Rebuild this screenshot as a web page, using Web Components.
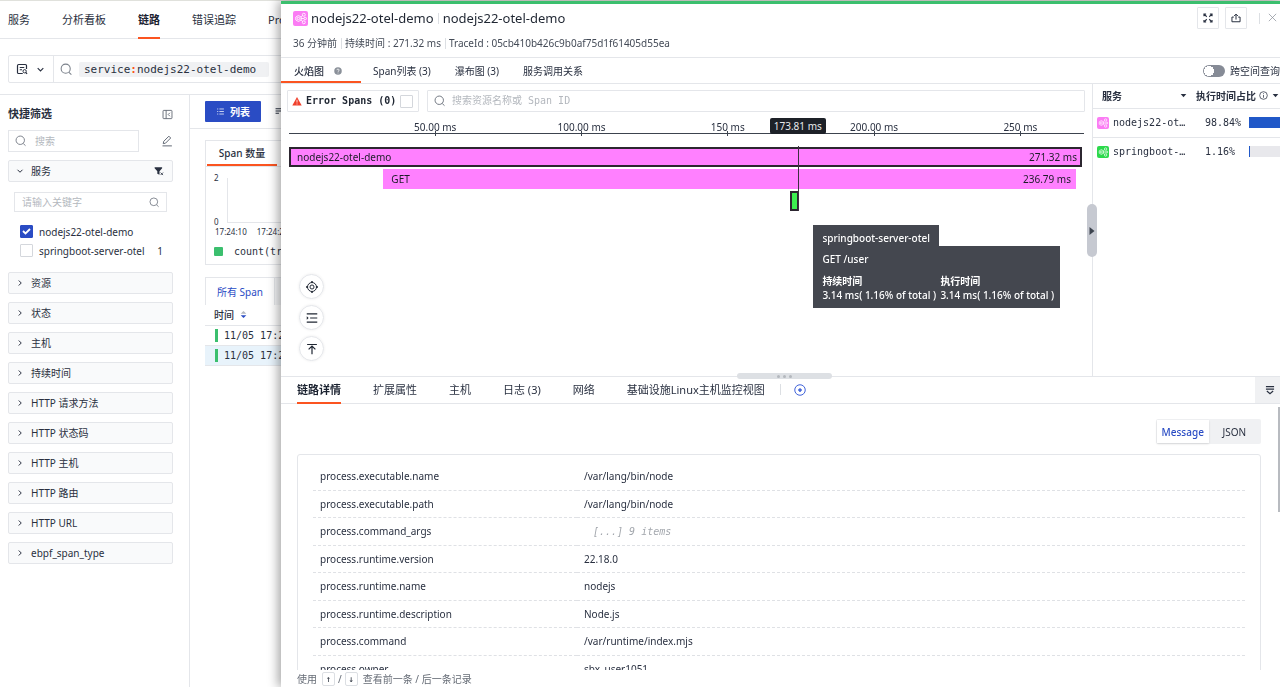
<!DOCTYPE html>
<html lang="zh-CN">
<head>
<meta charset="utf-8">
<title>链路</title>
<style>
html,body{height:100%;margin:0}
body{overflow:hidden;background:#fff;color:#293040;font:10px/14px "Noto Sans","Noto Sans CJK SC",sans-serif;
--line:#e4e6ea;--orange:#fb5420;--blue:#2a4cc4;--green:#3bbf6e;--mono:"DejaVu Sans Mono","Noto Sans CJK SC",monospace}
</style>
</head>
<body>
<trace-app></trace-app>
<script>
const reset = `*{box-sizing:border-box}:host{display:block}:host([hidden]){display:none}
button,input{font:inherit;color:inherit;margin:0;padding:0;border:0;background:none;outline:0}
button{cursor:pointer;white-space:nowrap}a{color:inherit;text-decoration:none;white-space:nowrap}h1,h2,p{margin:0;font:inherit}
input::placeholder{color:#b4b8be;opacity:1}`;
const define = (name, css, html) => customElements.define(name, class extends HTMLElement {
  constructor() {
    super();
    const t = document.createElement('template');
    t.innerHTML = `<style>${reset}${css}</style>${typeof html === 'function' ? html(this) : html}`;
    this.attachShadow({mode: 'open'}).append(t.content.cloneNode(true));
  }
});

const icons = {
  search: '<circle cx="7" cy="7" r="5.6"/><path d="M11 11.4l3 2.8"/>',
  query: '<path stroke-width="1.600" d="M14 8V3.500A1.500 1.500 0 0 0 12.500 2h-9A1.500 1.500 0 0 0 2 3.500v9A1.500 1.500 0 0 0 3.500 14H9M5 6h6M5 9h3"/><circle cx="11.500" cy="11" r="2.200"/><path stroke-width="1.600" d="M13 12.700l1.800 1.800"/>',
  down: '<path stroke-width="2" d="M3 5.500l5 5 5-5"/>',
  right: '<path stroke-width="2" d="M5.500 3l5 5-5 5"/>',
  fold: '<rect x="1.500" y="2" width="13" height="12" rx="1"/><path d="M6 2v12M11.500 5.500L9 8l2.500 2.500"/>',
  pencil: '<path d="M3 11.500l.6-3L10.500 1.600l2.400 2.400L6 10.900zM2 14.500h12.500"/>',
  filter: '<path fill="currentColor" stroke="none" d="M1 2h12v1.500L8.800 8.500V14l-3.500-1.800V8.500L1 3.500z"/><path stroke-width="1.300" d="M10.500 10.500l4 4m0-4l-4 4"/>',
  list: '<path d="M2 3.500h2M6 3.500h8M2 8h2M6 8h8M2 12.500h2M6 12.500h8"/>',
  sort: '<path stroke-width="2" d="M1 3h14M1 7h10M1 11h6"/>',
  full: '<path stroke-width="1.700" d="M1.500 1.500l4.500 4.500M14.500 1.500L10 6M1.500 14.500L6 10M14.500 14.500L10 10M1.500 5v-3.500H5M11 1.500h3.500V5M1.500 11v3.500H5M14.500 11v3.500H11"/>',
  share: '<path stroke-width="1.600" d="M4.500 6.500h-3v7.500h13V6.500h-3M8 10.500V2M5 4.800L8 1.800l3 3"/>',
  close: '<path d="M1.500 1.500l13 13m0-13l-13 13"/>',
  info: '<circle cx="8" cy="8" r="6.800"/><path d="M8 7v5M8 4v1.500"/>',
  help: '<circle cx="8" cy="8" r="7.500" fill="currentColor" stroke="none"/><path stroke="#fff" stroke-width="1.600" d="M5.800 6.300a2.200 2.200 0 1 1 2.900 2.100q-.7.300-.7 1.200M8 11.200v1.600"/>',
  warn: '<path fill="currentColor" stroke="none" d="M8 1.500L15.500 15H.5z"/><path stroke="#fff" d="M8 6v4.500M8 12v1.500"/>',
  target: '<circle cx="8" cy="8" r="6"/><circle cx="8" cy="8" r="2.700"/><path stroke-width="2" d="M8 0v2.500M8 13.500V16M0 8h2.500M13.500 8H16"/>',
  indent: '<path stroke-width="1.600" d="M1 2.500h14M5.500 8H15M1 13.500h14"/><path fill="currentColor" stroke="none" d="M1 5.800L3.500 8 1 10.200z"/>',
  top: '<path stroke-width="1.600" d="M1.500 2h13M8 15V4M3.500 8.500L8 4l4.500 4.500"/>',
  plus: '<circle cx="8" cy="8" r="7"/><path stroke-width="2" d="M5.500 8h5M8 5.500v5"/>',
  collapse: '<path stroke-width="1.900" d="M1.500 2.500h13M1.500 6.500h13M3 9.500l5 4.500 5-4.500"/>',
  caret: '<path fill="currentColor" stroke="none" d="M3 5.500h10L8 11z"/>',
  play: '<path fill="currentColor" stroke="none" d="M3 0l10 8-10 8z"/>',
  sorter: '<path fill="#b4b8be" stroke="none" d="M8 0l6.500 6h-13z"/><path fill="#2a4cc4" stroke="none" d="M8 16l6.500-6.500h-13z"/>',
  service: '<g stroke-width=".9"><path d="M5.800 4.800l2.800 1.600v3.200l-2.800 1.600L3 9.600V6.400z"/><circle cx="5.800" cy="8" r="1.300"/><circle cx="11.500" cy="4" r="1.600"/><circle cx="13" cy="8" r="1.300"/><circle cx="11.500" cy="12" r="1.600"/><path d="M8.500 6.500l1.700-1.500M8.600 8h3M8.500 9.500l1.700 1.500"/></g>'
};
define('ui-icon', ':host{display:inline-block;width:var(--s,12px);height:var(--s,12px);flex:none}svg{display:block;width:100%;height:100%}',
  el => `<svg viewBox="0 0 16 16" fill="none" stroke="currentColor" stroke-width="1.300" aria-hidden="true">${icons[el.getAttribute('name')] || ''}</svg>`);

define('service-badge', ':host{display:inline-flex;width:var(--s,12px);height:var(--s,12px);border-radius:2px;background:var(--c,#fb7cf4);color:#fff;flex:none}',
  '<ui-icon name="service"></ui-icon>');

define('ui-check', `:host{display:flex;white-space:nowrap}label{display:flex;align-items:center;gap:var(--gap,6px);flex:1}
input{appearance:none;width:13px;height:13px;border:1px solid #d4d7dc;border-radius:1px;background:#fff;flex:none}
input:checked{background:var(--blue) url('data:image/svg+xml,<svg xmlns="http://www.w3.org/2000/svg" viewBox="0 0 13 13"><path d="M3 6l2.500 2.500L10 4" fill="none" stroke="white" stroke-width="1.800"/></svg>') center/13px;border-color:var(--blue)}`,
  el => `<label><slot name="before"></slot><input type="checkbox" ${el.hasAttribute('checked') ? 'checked' : ''}><slot></slot></label>`);

define('top-nav', `nav{display:flex;gap:32px;height:39px;padding:0 8px;border-top:1px solid #e0e1dc;border-bottom:1px solid var(--line);font-size:11px}
a{line-height:37px;height:38px}a.on{font-weight:700;border-bottom:2px solid var(--orange);color:#1b2230}`,
  '<nav><a href="#">服务</a><a href="#">分析看板</a><a href="#" class="on">链路</a><a href="#">错误追踪</a><a href="#">Profile</a></nav>');

define('query-bar', `:host{padding:16px 8px 11px;border-bottom:1px solid var(--line)}
.b{display:flex;height:28px;border:1px solid var(--line);border-radius:2px;align-items:center}
button{display:flex;align-items:center;gap:8px;height:100%;width:45px;padding-left:7px;border-right:1px solid var(--line);--s:12px}
.q{display:flex;align-items:center;gap:6px;padding-left:6px;color:#7a808a;--s:13px}
code{font:11px/15px var(--mono);color:#293040;background:#f0f1f3;padding:0 13px 0 5px;border-radius:2px}i{font-style:normal;font-weight:700;color:var(--orange)}`,
  '<div class="b"><button aria-label="查询"><ui-icon name="query"></ui-icon><ui-icon name="down" style="--s:9px"></ui-icon></button><div class="q"><ui-icon name="search"></ui-icon><code>service<i>:</i>nodejs22-otel-demo</code></div></div>');

define('filter-group', `button{display:flex;align-items:center;width:100%;height:22px;border:1px solid var(--line);border-radius:2px;background:#f9fafb;padding:0 8px 0 7px;--s:8px}
span{flex:1;text-align:left;padding-left:7px}.body{padding:10px 6px 4px}`,
  el => `<button><ui-icon name="${el.hasAttribute('open') ? 'down' : 'right'}"></ui-icon><span>${el.getAttribute('label')}</span>${el.hasAttribute('open') ? '<ui-icon name="filter" style="--s:10px"></ui-icon>' : ''}</button>${el.hasAttribute('open') ? '<div class="body"><slot></slot></div>' : ''}`);

define('filter-panel', `:host{width:190px;flex:none;border-right:1px solid var(--line);padding:11px 16px 0 8px}
.head{display:flex;justify-content:space-between;align-items:center;height:16px;--s:11px}h2{font-weight:700;font-size:11px}.head ui-icon,.row>ui-icon{color:#5f6672}
.row{display:flex;align-items:center;margin:8px 0}
.in{display:flex;align-items:center;height:22px;border:1px solid var(--line);gap:8px;padding:0 6px;--s:12px;color:#7a808a}
.in input{flex:1;min-width:0}.s{width:131px}.d{width:1px;height:10px;background:var(--line);margin:0 11px}
filter-group{margin-bottom:8px}.kw{height:20px;margin-bottom:10px;padding:0 6px 0 7px;--s:11px}
ui-check{height:19px;margin-left:6px;padding-right:4px}ui-check span{flex:1}`,
  `<div class="head"><h2>快捷筛选</h2><ui-icon name="fold"></ui-icon></div>
<div class="row"><div class="in s"><ui-icon name="search"></ui-icon><input placeholder="搜索" aria-label="搜索"></div><i class="d"></i><ui-icon name="pencil"></ui-icon></div>
<filter-group label="服务" open><div class="in kw"><input placeholder="请输入关键字" aria-label="请输入关键字"><ui-icon name="search"></ui-icon></div>
<ui-check checked><span>nodejs22-otel-demo</span></ui-check><ui-check><span>springboot-server-otel</span><span style="flex:none">1</span></ui-check></filter-group>
${['资源','状态','主机','持续时间','HTTP 请求方法','HTTP 状态码','HTTP 主机','HTTP 路由','HTTP URL','ebpf_span_type'].map(x => `<filter-group label="${x}"></filter-group>`).join('')}`);

define('span-explorer', `:host{flex:1;min-width:0}
.bar{display:flex;align-items:center;gap:14px;height:34px;padding-left:15px;border-bottom:1px solid var(--line);--s:9px}
.bar button{display:flex;align-items:center;gap:5px;height:21px}.bar .on{width:56px;justify-content:center;background:var(--blue);color:#fff;font-weight:700;border-radius:1px}
.card{margin:11px 0 12px 15px;height:125px;border:1px solid var(--line)}
.tab{margin-left:1px;width:70px;height:25px;border-bottom:2px solid var(--orange);font-weight:500}
.tabs{display:flex;border-bottom:1px solid var(--line)}
.chart{display:grid;grid-template-columns:21px 1fr;font-size:8px;line-height:10px;margin-top:6px}
.y{display:flex;flex-direction:column;justify-content:space-between;height:54px;padding-left:8px}
.plot{border:solid var(--line);border-width:0 0 1px 1px;height:45px;margin-top:5px}
.x{grid-column:1/3;display:flex;gap:10px;padding-left:9px}
.legend{display:flex;align-items:center;gap:11px;padding:8px 0 0 8px;font:10px/13px var(--mono)}.legend i{width:9px;height:9px;background:var(--green);border-radius:1px}
.t2{display:flex;margin-left:15px;background:#f4f5f7;border:1px solid var(--line);border-right:0;border-bottom:0}.t2 button{width:69px;height:27px;background:#fff;color:var(--blue);border-right:1px solid var(--line)}
table{border-collapse:collapse;margin-left:15px;width:calc(100% - 15px)}th{font-weight:500;text-align:left;height:20px;padding:0 9px;border-bottom:1px solid var(--line)}
th span{display:flex;gap:6px;align-items:center;--s:7px}td{height:20px;padding:0 10px;border-bottom:1px solid var(--line);font:10px/13px var(--mono)}td span{border-left:3px solid var(--green);padding-left:6px;display:block;white-space:nowrap}tr.on{background:#e8f3fb}`,
  `<div class="bar"><button class="on"><ui-icon name="list"></ui-icon>列表</button><button><ui-icon name="sort"></ui-icon>聚合</button></div>
<div class="card"><div class="tabs"><button class="tab">Span 数量</button></div>
<div class="chart"><div class="y"><span>2</span><span>0</span></div><div class="plot"></div><div class="x"><span>17:24:10</span><span>17:24:20</span></div></div>
<div class="legend"><i></i>count(trace)</div></div>
<div class="t2"><button>所有 Span</button></div>
<table><thead><tr><th><span>时间<ui-icon name="sorter"></ui-icon></span></th></tr></thead><tbody><tr><td><span>11/05 17:24:13</span></td></tr><tr class="on"><td><span>11/05 17:24:13</span></td></tr></tbody></table>`);

define('drawer-header', `:host{height:54px;border-bottom:1px solid var(--line);padding:2px 3px 0 12px}
.r{display:flex;align-items:center;height:24px}.t{font-size:13px;line-height:18px;color:#1f2632;margin-left:3px}
.v{width:1px;height:11px;background:#dcdfe3;margin:0 4px}.sp{flex:1}
.ib{width:22px;height:22px;border:1px solid var(--line);border-radius:1px;margin-right:6px;display:grid;place-items:center;--s:10px}.ib+.v{margin:0 8px 0 6px}
.m{display:flex;align-items:center;height:26px;color:#444b57}.x{--s:9px;color:#8a9099}`,
  `<div class="r"><service-badge style="--s:15px"></service-badge><h1 class="t">nodejs22-otel-demo</h1><i class="v"></i><span class="t" style="margin:0">nodejs22-otel-demo</span><span class="sp"></span>
<button class="ib" aria-label="全屏"><ui-icon name="full"></ui-icon></button><button class="ib" aria-label="分享"><ui-icon name="share"></ui-icon></button><i class="v"></i><button class="x" aria-label="关闭"><ui-icon name="close"></ui-icon></button></div>
<div class="m">36 分钟前<i class="v" style="margin-right:3px"></i>持续时间 : 271.32 ms<i class="v" style="margin-right:3px"></i>TraceId : 05cb410b426c9b0af75d1f61405d55ea</div>`);

define('view-tabs', `:host{display:flex;height:26px;border-bottom:1px solid var(--line);align-items:stretch}
button{margin-right:24px}.on{width:80px;margin-right:12px;box-shadow:inset 0 -2px var(--orange);display:flex;align-items:center;gap:10px;padding-left:13px;font-weight:500;--s:8px}
.on ui-icon{color:#8a9099}.sp{flex:1}label{display:flex;align-items:center;gap:5px;white-space:nowrap}
label input{appearance:none;width:22px;height:12px;border-radius:6px;background:radial-gradient(circle at 6px 6px,#fff 5px,#868b96 5px)}`,
  `<button class="on">火焰图<ui-icon name="help"></ui-icon></button><button>Span列表 (3)</button><button>瀑布图 (3)</button><button>服务调用关系</button><span class="sp"></span><label><input type="checkbox" role="switch">跨空间查询</label>`);

define('flame-graph', `:host{flex:1;min-width:0;padding:6px 7px 0 6px;position:relative}
.tools{display:flex;gap:8px}.box{height:22px;border:1px solid var(--line);border-radius:1px;display:flex;align-items:center;padding:0 6px;font-family:var(--mono);--s:12px;color:#6f7580}
.err{width:132px;padding:0 4px;color:#1f2632;font-weight:700;--gap:4px}.err ui-icon{--s:10px;color:#f0402c}.find{flex:1;gap:6px}.find input{flex:1}
.axis{height:22px;margin:0 1px 0 2px;border-bottom:1px solid #3c434e;display:grid;grid-template-columns:repeat(5,18.400%);position:relative}
.axis span{text-align:center;line-height:17px;margin:7px -40px 0 calc(100% - 40px);white-space:nowrap;background:linear-gradient(#3c434e,#3c434e) 50% 100%/1px 5px no-repeat}
.now{position:absolute;left:calc(64% - 28px);top:6px;width:56px;height:16px;border-radius:2px;background:#1d2128;color:#e8eaed;text-align:center;line-height:17px}
.rows{margin:13px 3px 0 2px;position:relative}
.bar{display:flex;justify-content:space-between;align-items:center;height:20px;margin-bottom:2px;padding:0 5px 0 8px;background:#ff80ff;color:#1c1c28}
.sel{border:2px solid #2c2630;padding:0 3px 0 6px}.cur{position:absolute;left:calc(64% + 1px);top:-1px;width:1px;height:65px;background:#3c3040}
.tip{position:absolute;left:calc(66% + 1px);top:78px;color:#fff;font-weight:500}.tip h2{display:inline-block;padding:0 9px;height:21px;line-height:26px;background:#44474f;vertical-align:top;white-space:nowrap}
.tip div{background:#44474f;width:247px;height:62px;padding:6px 9px;display:grid;grid-template-columns:110px 110px;column-gap:8px;align-content:start;white-space:nowrap}.tip p{grid-column:1/3;margin-bottom:8px}.tip b{font-weight:700}
.fab{position:absolute;left:18px;bottom:15px;display:grid;gap:6px}.fab button{width:25px;height:25px;border:1px solid var(--line);border-radius:50%;display:grid;place-items:center;box-shadow:0 0 3px #00000014;--s:12px;color:#1f2632}`,
  `<div class="tools"><div class="box err"><ui-check><ui-icon slot="before" name="warn"></ui-icon><span slot="before">Error Spans (0)</span></ui-check></div><div class="box find"><ui-icon name="search"></ui-icon><input placeholder="搜索资源名称或 Span ID" aria-label="搜索资源名称或 Span ID"></div></div>
<div class="axis"><span>50.00 ms</span><span>100.00 ms</span><span>150 ms</span><span>200.00 ms</span><span>250 ms</span><div class="now">173.81 ms</div></div>
<div class="rows"><div class="bar sel"><span>nodejs22-otel-demo</span><span>271.32 ms</span></div>
<div class="bar" style="margin-left:11.900%;margin-right:6px"><span>GET</span><span>236.79 ms</span></div>
<div class="bar sel" style="margin-left:63.200%;width:9px;padding:0;background:#3cf050"></div>
<i class="cur"></i><div class="tip"><h2>springboot-server-otel</h2><div><p>GET /user</p><b>持续时间</b><b>执行时间</b><span>3.14 ms( 1.16% of total )</span><span>3.14 ms( 1.16% of total )</span></div></div></div>
<div class="fab"><button aria-label="定位"><ui-icon name="target"></ui-icon></button><button aria-label="缩进"><ui-icon name="indent"></ui-icon></button><button aria-label="置顶"><ui-icon name="top"></ui-icon></button></div>`);

define('service-share', `:host{width:188px;flex:none;border-left:1px solid var(--line);position:relative}
table{border-collapse:collapse;table-layout:fixed;width:100%}th{height:24px;font-weight:700;text-align:left;padding:0}th:first-child{width:100px;padding:0 5px 0 9px}
th span{display:flex;align-items:center;justify-content:space-between;white-space:nowrap;--s:9px}th+th span{justify-content:start;gap:3px}
th i{width:1px;height:8px;background:#dcdfe3}
td{border-top:1px solid var(--line);height:29px;padding:0;font:10px/14px var(--mono)}td:first-child{padding-left:4px}td span{display:flex;align-items:center;gap:4px;white-space:nowrap}
td .p{gap:0;padding-left:12px}.p b{font-weight:400;width:44px}.p i{flex:1;height:11px;background:linear-gradient(90deg,#2058c8 var(--w),#e8e8ec var(--w))}
.grip{position:absolute;left:-6px;top:120px;width:10px;height:53px;border-radius:5px;background:#c6c9d1;color:#3c434e;display:grid;place-items:center;--s:8px}`,
  `<table><thead><tr><th><span>服务<ui-icon name="caret"></ui-icon></span></th><th><span><i></i>执行时间占比<ui-icon name="info"></ui-icon><ui-icon name="caret"></ui-icon></span></th></tr></thead>
<tbody><tr><td><span><service-badge></service-badge>nodejs22-ot…</span></td><td><span class="p"><b>98.84%</b><i style="--w:98.840%"></i></span></td></tr>
<tr><td><span><service-badge style="--c:#2cd94c"></service-badge>springboot-…</span></td><td><span class="p"><b>1.16%</b><i style="--w:1px"></i></span></td></tr></tbody></table>
<button class="grip" aria-label="收起"><ui-icon name="play"></ui-icon></button>`);

define('detail-tabs', `:host{display:flex;height:28px;padding-left:16px;gap:32px;border:solid var(--line);border-width:1px 0;position:relative;font-size:11px;color:#293040}
button{height:27px;border-bottom:2px solid transparent}.on{font-weight:700;color:#1b2230;border-color:var(--orange)}
.add{display:flex;align-items:center;gap:13px;margin-left:-17px;color:#3c5fd8;--s:12px}.add i{width:1px;height:11px;background:#dcdfe3}
.fold{margin-left:auto;width:25px;background:#f0f1f3;display:grid;place-items:center;--s:10px;height:26px;padding-left:5px;border:0}
.grip{position:absolute;left:calc(50% - 44px);top:-4px;width:95px;height:6px;border-radius:3px;background:#dde0e4;display:flex;align-items:center;justify-content:center;gap:3px}.grip i{width:3px;height:3px;border-radius:50%;background:#b4b8be}`,
  `<button class="on">链路详情</button><button>扩展属性</button><button>主机</button><button>日志 (3)</button><button>网络</button><button>基础设施Linux主机监控视图</button>
<button class="add" aria-label="添加"><i></i><ui-icon name="plus"></ui-icon></button><button class="fold" aria-label="折叠"><ui-icon name="collapse"></ui-icon></button><div class="grip"><i></i><i></i><i></i></div>`);

const attrs = [['process.executable.name','/var/lang/bin/node'],['process.executable.path','/var/lang/bin/node'],['process.command_args',null],['process.runtime.version','22.18.0'],['process.runtime.name','nodejs'],['process.runtime.description','Node.js'],['process.command','/var/runtime/index.mjs'],['process.owner','sbx_user1051']];
define('attribute-view', `:host{flex:1;min-height:0;overflow:hidden;padding:15px 19px 0 16px;position:relative}
.sw{display:flex;width:105px;height:25px;margin:0 0 10px auto;background:#f0f1f3;border-radius:2px;padding:1px}.sw button{flex:1}.sw .on{background:#fff;color:var(--blue);box-shadow:0 1px 2px #0000001f;font-weight:500}
.card{border:1px solid var(--line);border-radius:3px;padding:7px 15px 20px}
table{width:100%;border-collapse:collapse;table-layout:fixed}td{height:27px;padding:0 0 0 7px;border-bottom:1px dashed #dfe1e5}tr:nth-child(odd) td{height:28px}td:first-child{width:264px}
em{font-family:var(--mono);color:#a4a8ae;padding-left:9px}
.bar{position:absolute;right:0;top:3px;width:2px;height:105px;background:#b8bbc0}`,
  `<div class="sw"><button class="on">Message</button><button>JSON</button></div><div class="card"><table>${attrs.map(([k, v]) => `<tr><td>${k}</td><td>${v || '<em>[...] 9 items</em>'}</td></tr>`).join('')}</table></div><i class="bar"></i>`);

define('drawer-footer', `:host{display:flex;align-items:center;height:17px;padding:1px 0 0 16px;gap:5px;color:#666c76}kbd{font:9px/12px var(--mono);width:13px;height:14px;text-align:center;border:1px solid #dcdfe3;border-radius:2px;color:#1f2632}span{display:flex;gap:3px}`,
  '使用<span><kbd>↑</kbd>/<kbd>↓</kbd></span>查看前一条 / 后一条记录');

define('trace-drawer', `:host{position:fixed;inset:1px 0 0 281px;display:flex;flex-direction:column;background:#fff;border-top:3px solid var(--green);box-shadow:-3px 0 10px #00000059}
.top{display:flex;flex:none;height:292px}`,
  `<drawer-header></drawer-header><view-tabs></view-tabs><div class="top"><flame-graph></flame-graph><service-share></service-share></div><detail-tabs></detail-tabs><attribute-view></attribute-view><drawer-footer></drawer-footer>`);

define('trace-app', ':host{height:100%;overflow:hidden}main{display:flex;min-height:calc(100% - 95px)}',
  '<top-nav></top-nav><query-bar></query-bar><main><filter-panel></filter-panel><span-explorer></span-explorer></main><trace-drawer></trace-drawer>');
</script>
</body>
</html>
